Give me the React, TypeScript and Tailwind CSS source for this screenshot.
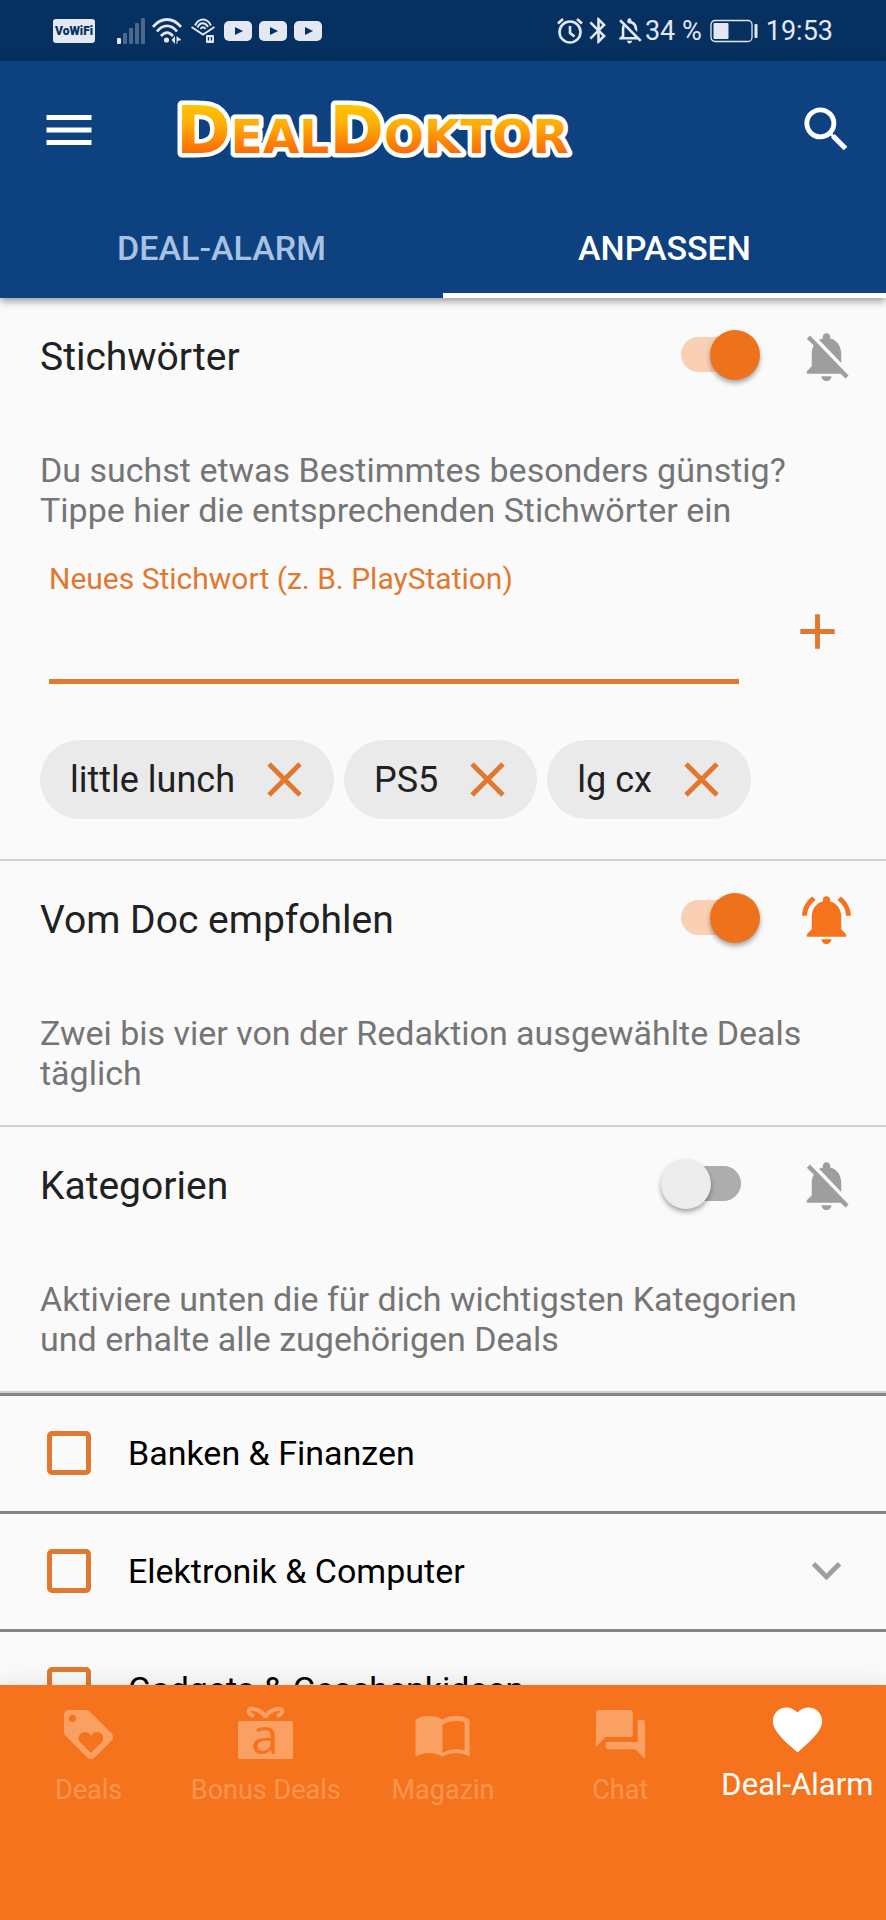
import { useState } from 'react';
import type { ReactNode } from 'react';
import {
  MdAdd,
  MdBluetooth,
  MdClose,
  MdExpandMore,
  MdFavorite,
  MdForum,
  MdLoyalty,
  MdMenu,
  MdNotificationsActive,
  MdNotificationsOff,
  MdOutlineNotificationsOff,
  MdSearch,
} from 'react-icons/md';

const SignalIcon = () => (
  <svg viewBox="0 0 28 26" className="h-[26px] w-7" fill="currentColor">
    <rect x="0" y="20" width="4" height="6" rx="1" />
    <g opacity="0.3">
      <rect x="6" y="15" width="4" height="11" rx="1" />
      <rect x="12" y="10" width="4" height="16" rx="1" />
      <rect x="18" y="5" width="4" height="21" rx="1" />
      <rect x="24" y="0" width="4" height="26" rx="1" />
    </g>
  </svg>
);

const WifiIcon = () => (
  <svg viewBox="0 0 30 26" className="h-[26px] w-[30px]" fill="none" stroke="currentColor" strokeWidth="2.8">
    <path d="M1 9C9-1 21-1 29 9" />
    <path d="M5 13.500C11 6 19 6 25 13.500" />
    <path d="M9 18C13 13.500 17 13.500 21 18" />
    <circle cx="14.500" cy="22" r="2.600" fill="currentColor" stroke="none" />
    <path d="M19.500 22l3.500-4v8zM24.500 18v8l1-.500v-2.500l4-1z" fill="currentColor" stroke="none" />
  </svg>
);

const AudioBookIcon = () => (
  <svg viewBox="0 0 24 26" className="mx-0.5 h-[26px] w-6" fill="none" stroke="currentColor" strokeWidth="2">
    <path d="M.500 9l11.500 7.500L23.500 9" />
    <path d="M4 7.500C8-.500 16-.500 20 7.500M6.500 9.500C9 4 14 4 17 9M9.500 11C11 8.500 13 8.500 14.500 11" />
    <rect x="15" y="17" width="8" height="8" rx="1" fill="currentColor" stroke="none" />
    <path d="M17.500 19v3.500M20.500 19v3.500" stroke="#05305f" strokeWidth="1.300" />
  </svg>
);

const VideoIcon = () => (
  <svg viewBox="0 0 28 20" className="h-5 w-7">
    <rect width="28" height="20" rx="5" fill="currentColor" />
    <path d="M11 6l8 4-8 4z" fill="#05305f" />
  </svg>
);

const AlarmIcon = () => (
  <svg viewBox="0 0 26 26" className="h-[26px] w-[26px]" fill="none" stroke="currentColor" strokeWidth="2.600">
    <circle cx="13" cy="14" r="10.500" />
    <path d="M13 8v7l4.500 3.500M1 5.500L6 1M25 5.500L20 1" />
  </svg>
);

const BatteryIcon = () => (
  <svg viewBox="0 0 48 24" className="h-6 w-12">
    <rect x="1" y="1.500" width="41" height="21" rx="4" fill="none" stroke="currentColor" strokeWidth="1.300" />
    <rect x="3.500" y="4" width="15" height="16" rx="1" fill="currentColor" />
    <rect x="44.500" y="5" width="3" height="14" rx="1" fill="currentColor" />
  </svg>
);

const Logo = () => (
  <svg viewBox="0 0 410 62" className="h-[62px] w-[410px] overflow-visible" role="img" aria-label="DealDoktor">
    <defs>
      <linearGradient id="logo-fill" gradientUnits="userSpaceOnUse" x1="0" y1="6" x2="0" y2="54">
        <stop offset="0" stopColor="#ffc400" />
        <stop offset="0.4" stopColor="#ffae08" />
        <stop offset="1" stopColor="#fb6a05" />
      </linearGradient>
    </defs>
    <text
      x="1"
      y="54"
      className="font-['DejaVu_Sans',sans-serif] text-[47px] font-bold"
      fill="url(#logo-fill)"
      stroke="#fff"
      strokeWidth="9"
      strokeLinejoin="round"
      paintOrder="stroke"
    >
      <tspan className="text-[66px]">D</tspan>EAL<tspan className="text-[66px]">D</tspan>OKTOR
    </text>
  </svg>
);

const GiftIcon = () => (
  <svg viewBox="0 0 59 59" className="h-[59px] w-[59px] overflow-visible">
    <rect x="2" y="16" width="55" height="38" rx="2" fill="currentColor" />
    <path
      d="M29.500 12C26 5 15 2 13 5C12 8 15 10 18 11M29.500 12C33 5 44 2 46 5C47 8 44 10 41 11"
      fill="none"
      stroke="currentColor"
      strokeWidth="4"
    />
    <text x="29" y="49" textAnchor="middle" fill="#f6731d" className="font-['Open_Sans',sans-serif] text-[50px]">
      a
    </text>
  </svg>
);

const MagazineIcon = () => (
  <svg viewBox="0 0 24 24" className="h-[59px] w-[59px]" fill="currentColor">
    <path d="M1 6c1.450-1.100 3.550-1.500 5.500-1.500S10.550 4.900 12 6c1.450-1.100 3.550-1.500 5.500-1.500S21.550 4.900 23 6v15c-1.500-1-3.500-1.500-5.500-1.500S13.350 20.150 12 21c-1.350-.850-3.800-1.500-5.500-1.500S2.500 20 1 21zM21 18.500V7c-1.100-.350-2.300-.500-3.500-.500-1.700 0-4.150.650-5.500 1.500V19.500c1.350-.850 3.800-1.500 5.500-1.500 1.200 0 2.400.150 3.500.500z" />
  </svg>
);

type SectionProps = {
  id: string;
  title: string;
  text: string;
  defaultOn: boolean;
  bell: boolean;
  children?: ReactNode;
};

const Section = ({ id, title, text, defaultOn, bell, children }: SectionProps) => {
  const [on, setOn] = useState(defaultOn);

  return (
    <section className="border-b-2 border-[#d0d0d0]">
      <div className="flex h-[117px] items-center pr-[30px] pl-10">
        <label htmlFor={id} className="flex-1 text-[39px] leading-[46px] text-[#212121]">
          {title}
        </label>
        <input
          id={id}
          type="checkbox"
          role="switch"
          checked={on}
          onChange={(e) => setOn(e.target.checked)}
          className="relative mr-14 mb-1 h-[35px] w-[60px] appearance-none rounded-full bg-[#adadad] before:absolute before:-top-[7px] before:-left-5 before:size-[50px] before:rounded-full before:bg-[#ececec] before:shadow-[0_3px_5px_rgba(0,0,0,0.35)] checked:bg-[#f9d0b4] checked:before:left-[29px] checked:before:bg-[#ee711c]"
        />
        <button type="button" aria-label={`Benachrichtigung ${title}`}>
          {bell ? (
            <MdNotificationsActive className="size-[59px] text-[#f6731d]" />
          ) : (
            <MdNotificationsOff className="size-[59px] text-[#9e9e9e]" />
          )}
        </button>
      </div>
      <p className="px-10 pt-[35px] pb-8 text-[34px] leading-10 text-[#757575]">{text}</p>
      {children}
    </section>
  );
};

const keywords = ['little lunch', 'PS5', 'lg cx'];

const categories = [
  { id: 'banken', name: 'Banken & Finanzen', expandable: false },
  { id: 'elektronik', name: 'Elektronik & Computer', expandable: true },
  { id: 'gadgets', name: 'Gadgets & Geschenkideen', expandable: false },
];

const navItems = [
  { name: 'Deals', icon: <MdLoyalty className="size-[59px]" />, active: false },
  { name: 'Bonus Deals', icon: <GiftIcon />, active: false },
  { name: 'Magazin', icon: <MagazineIcon />, active: false },
  { name: 'Chat', icon: <MdForum className="size-[59px]" />, active: false },
  { name: 'Deal-Alarm', icon: <MdFavorite className="size-[59px]" />, active: true },
];

const App = () => {
  return (
    <div className="flex h-screen flex-col overflow-hidden bg-[#fafafa] font-['Roboto','Noto_Sans',sans-serif]">
      <div className="flex h-[61px] shrink-0 items-center bg-[#05305f] px-[53px] text-[#e3e8f3]">
        <span className="mr-[22px] flex h-6 w-[42px] items-center justify-center rounded-[3px] bg-[#e3e8f3] text-[12px] font-black text-[#05305f]">
          VoWiFi
        </span>
        <div className="flex flex-1 items-center gap-[7px]">
          <SignalIcon />
          <WifiIcon />
          <AudioBookIcon />
          <VideoIcon />
          <VideoIcon />
          <VideoIcon />
        </div>
        <div className="flex items-center gap-2 text-[27px] leading-8">
          <div className="flex items-center">
            <AlarmIcon />
            <MdBluetooth className="size-[31px]" />
            <MdOutlineNotificationsOff className="size-[31px]" />
            <span>34 %</span>
          </div>
          <BatteryIcon />
          <span>19:53</span>
        </div>
      </div>

      <header className="relative z-10 shrink-0 bg-[#0d4180] shadow-[0_3px_8px_rgba(0,0,0,0.4)]">
        <div className="flex h-[137px] items-center pr-[30px] pl-[39px] text-white">
          <button type="button" aria-label="Menü">
            <MdMenu className="size-[60px]" />
          </button>
          <div className="flex-1 pl-[76px]">
            <Logo />
          </div>
          <button type="button" aria-label="Suche">
            <MdSearch className="size-[59px]" />
          </button>
        </div>
        <div role="tablist" className="grid h-[100px] grid-cols-2 text-[34px] font-medium">
          <button type="button" role="tab" aria-selected="false" className="text-[#a9c1e2]">
            DEAL-ALARM
          </button>
          <button
            type="button"
            role="tab"
            aria-selected="true"
            className="border-b-5 border-white pt-[5px] text-white"
          >
            ANPASSEN
          </button>
        </div>
      </header>

      <main className="min-h-0 flex-1 overflow-y-auto [scrollbar-width:none]">
        <Section
          id="stichwoerter"
          title="Stichwörter"
          text="Du suchst etwas Bestimmtes besonders günstig? Tippe hier die entsprechenden Stichwörter ein"
          defaultOn
          bell={false}
        >
          <form className="flex items-center pr-[39px] pl-[49px]" onSubmit={(e) => e.preventDefault()}>
            <div className="flex flex-1 flex-col">
              <label htmlFor="keyword" className="text-[30px] leading-[34px] text-[#e0792f]">
                Neues Stichwort (z. B. PlayStation)
              </label>
              <input
                id="keyword"
                type="text"
                className="h-[88px] border-b-5 border-[#e0792f] bg-transparent text-[39px] outline-none"
              />
            </div>
            <button type="submit" aria-label="Hinzufügen" className="ml-[49px] pt-4 text-[#e0792f]">
              <MdAdd className="size-[59px]" />
            </button>
          </form>
          <ul className="flex flex-wrap gap-[10px] px-10 pt-14 pb-10">
            {keywords.map((word) => (
              <li
                key={word}
                className="flex h-[79px] items-center gap-5 rounded-full bg-[#eaeaea] pr-5 pl-[30px] text-[36px] text-[#212121]"
              >
                {word}
                <button type="button" aria-label={`${word} entfernen`} className="text-[#e0792f]">
                  <MdClose className="size-[59px]" />
                </button>
              </li>
            ))}
          </ul>
        </Section>
        <Section
          id="empfohlen"
          title="Vom Doc empfohlen"
          text="Zwei bis vier von der Redaktion ausgewählte Deals täglich"
          defaultOn
          bell
        />
        <Section
          id="kategorien"
          title="Kategorien"
          text="Aktiviere unten die für dich wichtigsten Kategorien und erhalte alle zugehörigen Deals"
          defaultOn={false}
          bell={false}
        />
        <ul>
          {categories.map((category) => (
            <li
              key={category.id}
              className="flex h-[118px] items-center border-t-3 border-[#858585] pr-[30px] pb-0.5 pl-[47px]"
            >
              <input
                id={category.id}
                type="checkbox"
                className="size-11 appearance-none rounded-[5px] border-5 border-[#e0792f] checked:bg-[#e0792f]"
              />
              <label htmlFor={category.id} className="flex-1 pl-[37px] text-[34px] leading-10 text-black">
                {category.name}
              </label>
              {category.expandable && (
                <button type="button" aria-label={`${category.name} aufklappen`} className="text-[#9e9e9e]">
                  <MdExpandMore className="size-[59px]" />
                </button>
              )}
            </li>
          ))}
        </ul>
      </main>

      <nav className="relative z-10 grid h-[235px] shrink-0 grid-cols-5 bg-[#f6731d] shadow-[0_-2px_20px_rgba(0,0,0,0.1)]">
        {navItems.map((item) => (
          <a
            key={item.name}
            href="#"
            aria-current={item.active ? 'page' : undefined}
            className={
              item.active
                ? 'flex flex-col items-center gap-2 pt-[15px] text-[31px] leading-9 whitespace-nowrap text-white'
                : 'flex flex-col items-center gap-2 pt-5 text-[27px] leading-9 whitespace-nowrap text-[#f9a062]'
            }
          >
            {item.icon}
            <span className={item.active ? '' : 'text-[#f99550]'}>{item.name}</span>
          </a>
        ))}
      </nav>
    </div>
  );
};

export default App;
